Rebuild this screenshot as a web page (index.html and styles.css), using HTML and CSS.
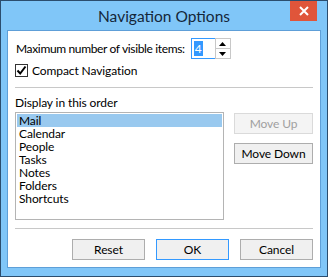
FILE: index.html
```html
<!DOCTYPE html>
<html lang="en">
<head>
    <meta charset="UTF-8">
    <title>Navigation Options</title>
    <link rel="stylesheet" href="styles.css">
</head>
<body>

<div class="window">
    <div class="titlebar">
        <span></span>
        <h1 class="title">Navigation Options</h1>
        <button class="close" aria-label="Close">
            <svg width="10" height="10" viewBox="0 0 10 10">
                <path d="M1 1 L9 9 M9 1 L1 9" stroke="#fff" stroke-width="2"/>
            </svg>
        </button>
    </div>

    <div class="content">
        <div class="row-max">
            <label for="max-items">Maximum number of visible items:</label>
            <div class="spin">
                <span class="spin-input"><span class="selected">4</span></span>
                <span class="spin-buttons">
                    <span class="spin-btn">
                        <svg width="7" height="4" viewBox="0 0 7 4"><path d="M0 4 L3.5 0 L7 4 Z" fill="#000"/></svg>
                    </span>
                    <span class="spin-btn">
                        <svg width="7" height="4" viewBox="0 0 7 4"><path d="M0 0 L3.5 4 L7 0 Z" fill="#000"/></svg>
                    </span>
                </span>
            </div>
        </div>

        <div class="row-check">
            <span class="checkbox">
                <svg width="11" height="11" viewBox="0 0 11 11">
                    <path d="M1.5 5.5 L4.2 8.5 L9.5 1.5" fill="none" stroke="#000" stroke-width="2"/>
                </svg>
            </span>
            <span>Compact Navigation</span>
        </div>

        <hr class="sep">

        <div class="order-label">Display in this order</div>
        <div class="order">
            <ul class="list">
                <li class="active">Mail</li>
                <li>Calendar</li>
                <li>People</li>
                <li>Tasks</li>
                <li>Notes</li>
                <li>Folders</li>
                <li>Shortcuts</li>
            </ul>
            <div class="side-buttons">
                <button class="btn btn-side" disabled>Move Up</button>
                <button class="btn btn-side">Move Down</button>
            </div>
        </div>

        <hr class="sep sep-bottom">

        <div class="footer-buttons">
            <button class="btn">Reset</button>
            <button class="btn btn-default">OK</button>
            <button class="btn">Cancel</button>
        </div>
    </div>
</div>

</body>
</html>
```

FILE: styles.css
```css
body {
    margin: 0;
    padding: 0;
    font-family: Lato, 'Noto Sans', sans-serif;
    font-size: 12px;
    letter-spacing: -0.1px;
    color: #000;
}
.window {
    width: 328px;
    height: 277px;
    box-sizing: border-box;
    border: 1px solid #2b4d6e;
    background: #80c6f8;
    padding: 0 6px 8px;
}
.titlebar {
    height: 29px;
    margin: 0 -6px;
    display: grid;
    grid-template-columns: 1fr auto 1fr;
    align-items: start;
}
.title {
    margin: 0;
    font-size: 15.5px;
    font-weight: normal;
    letter-spacing: 0;
    line-height: 30px;
    color: #14263a;
}
.close {
    justify-self: end;
    margin-right: 10px;
    width: 27px;
    height: 20px;
    border: none;
    padding: 0;
    background: #e0553a;
    display: flex;
    align-items: center;
    justify-content: center;
}
.content {
    height: 238px;
    box-sizing: border-box;
    border: 1px solid #5e9fd8;
    background: #fff;
    padding: 7px 7px 0;
}
.row-max {
    display: flex;
    align-items: center;
    height: 21px;
    padding-left: 1px;
}
.row-max label {
    margin-right: 6px;
    letter-spacing: -0.35px;
}
.spin {
    display: flex;
    height: 21px;
}
.spin-input {
    width: 24px;
    box-sizing: border-box;
    border: 1px solid #3399ff;
    border-right: none;
    display: flex;
    align-items: center;
    padding-left: 2px;
}
.selected {
    background: #3399ff;
    color: #fff;
    line-height: 15px;
    padding: 0 1px;
}
.spin-buttons {
    width: 16px;
    box-sizing: border-box;
    border: 1px solid #c8c8c8;
    display: flex;
    flex-direction: column;
}
.spin-btn {
    flex: 1;
    display: flex;
    align-items: center;
    justify-content: center;
}
.spin-btn + .spin-btn {
    border-top: 1px solid #c8c8c8;
}
.row-check {
    display: flex;
    align-items: center;
    gap: 4px;
    margin-top: 4px;
    height: 14px;
}
.checkbox {
    width: 13px;
    height: 13px;
    box-sizing: border-box;
    border: 1px solid #333;
    display: flex;
    align-items: center;
    justify-content: center;
}
.sep {
    border: none;
    border-top: 1px solid #c8c8c8;
    margin: 10px 0 0;
}
.order-label {
    margin-top: 7px;
    line-height: 16px;
}
.order {
    display: flex;
    margin-top: 1px;
}
.list {
    list-style: none;
    margin: 0;
    width: 210px;
    height: 108px;
    box-sizing: border-box;
    border: 1px solid #b4b4b4;
    padding: 1px;
}
.list li {
    line-height: 13px;
    padding-left: 2px;
}
.list li.active {
    background: #99c9ef;
}
.side-buttons {
    display: flex;
    flex-direction: column;
    gap: 9px;
    margin-left: 10px;
    padding-top: 1px;
}
.btn {
    width: 73px;
    height: 21px;
    box-sizing: border-box;
    border: 1px solid #adadad;
    background: #f0f0f0;
    font-family: inherit;
    font-size: 12px;
    letter-spacing: -0.1px;
    color: #000;
    padding: 0;
}
.btn-side {
    width: 79px;
}
.btn:disabled {
    border-color: #dadada;
    background: #f4f4f4;
    color: #a0a0a0;
}
.btn-default {
    border-color: #3399ff;
}
.sep-bottom {
    margin-top: 8px;
}
.footer-buttons {
    display: flex;
    justify-content: flex-end;
    gap: 11px;
    margin-top: 10px;
}
```
